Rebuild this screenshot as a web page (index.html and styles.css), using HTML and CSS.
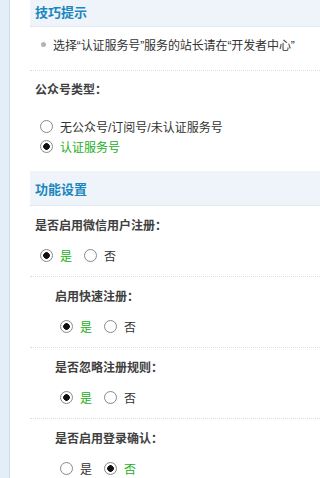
FILE: index.html
```html
<!DOCTYPE html>
<html lang="zh">
<head>
<meta charset="utf-8">
<link rel="stylesheet" href="styles.css">
</head>
<body>
<div class="page">
  <div class="rail"></div>
  <div class="main">
    <div class="section-head">技巧提示</div>
    <div class="tips">
      <span class="dot"></span><span class="tip-text">选择“认证服务号”服务的站长请在“开发者中心”</span>
    </div>
    <div class="type-block">
      <div class="label">公众号类型：</div>
      <label class="opt"><input type="radio" class="radio" name="t"><span>无公众号/订阅号/未认证服务号</span></label>
      <label class="opt on"><input type="radio" class="radio" name="t" checked><span>认证服务号</span></label>
    </div>
    <div class="section-head tall">功能设置</div>
    <div class="field">
      <div class="label">是否启用微信用户注册：</div>
      <div class="choices">
        <label class="opt on"><input type="radio" class="radio" name="a" checked><span>是</span></label>
        <label class="opt"><input type="radio" class="radio" name="a"><span>否</span></label>
      </div>
    </div>
    <div class="field sub">
      <div class="label">启用快速注册：</div>
      <div class="choices">
        <label class="opt on"><input type="radio" class="radio" name="b" checked><span>是</span></label>
        <label class="opt"><input type="radio" class="radio" name="b"><span>否</span></label>
      </div>
    </div>
    <div class="field sub">
      <div class="label">是否忽略注册规则：</div>
      <div class="choices">
        <label class="opt on"><input type="radio" class="radio" name="c" checked><span>是</span></label>
        <label class="opt"><input type="radio" class="radio" name="c"><span>否</span></label>
      </div>
    </div>
    <div class="field sub">
      <div class="label">是否启用登录确认：</div>
      <div class="choices">
        <label class="opt"><input type="radio" class="radio" name="d"><span>是</span></label>
        <label class="opt on"><input type="radio" class="radio" name="d" checked><span>否</span></label>
      </div>
    </div>
  </div>
</div>
</body>
</html>
```
FILE: styles.css
```css
html, body {
  margin: 0;
  padding: 0;
  background: #fff;
}
body {
  font-family: "Liberation Sans", "Noto Sans CJK SC", sans-serif;
  font-size: 12px;
  color: #333;
  overflow: hidden;
}
.page {
  display: flex;
  min-height: 478px;
}
.rail {
  width: 9px;
  flex: none;
  background: #e4eef9;
  border-right: 1px solid #c8ddef;
}
.main {
  flex: 1;
  min-width: 0;
  padding-left: 20px;
  overflow: hidden;
}
.section-head {
  height: 26px;
  line-height: 26px;
  padding-left: 5px;
  background: #eef4fa;
  border-bottom: 1px dotted #d6e2ec;
  color: #1b86bf;
  font-weight: bold;
  font-size: 13px;
}
.section-head.tall {
  height: 34px;
  line-height: 38px;
}
.tips {
  display: flex;
  align-items: center;
  height: 20px;
  padding: 7px 0 16px 0;
  border-bottom: 1px dotted #d6dde3;
  white-space: nowrap;
}
.dot {
  width: 5px;
  height: 5px;
  border-radius: 50%;
  background: #b4b4b4;
  margin: 0 7px 0 11px;
  flex: none;
}
.tip-text {
  color: #333;
  letter-spacing: -0.1px;
}
.label {
  height: 20px;
  line-height: 20px;
  padding-left: 5px;
  font-weight: bold;
  color: #404040;
}
.type-block {
  padding: 9px 0 15px 0;
}
.type-block .label {
  margin-bottom: 16px;
}
.type-block .opt {
  display: flex;
}
.opt {
  display: inline-flex;
  align-items: center;
  height: 20px;
  padding-left: 10px;
  gap: 7px;
  color: #333;
}
.opt.on {
  color: #22b022;
}
.choices {
  display: flex;
  gap: 2px;
  margin-top: 9px;
}
.radio {
  appearance: none;
  -webkit-appearance: none;
  margin: 0;
  width: 13px;
  height: 13px;
  border: 1px solid #8a8a8a;
  border-radius: 50%;
  background: radial-gradient(circle, #fff 0 60%, #ececec 100%);
  box-sizing: border-box;
  flex: none;
}
.radio:checked {
  background: radial-gradient(circle, #111 0 3px, #fff 3.6px 60%, #e8e8e8 100%);
}
.field {
  padding: 10px 0 11px 0;
  border-bottom: 1px dotted #d6dde3;
}
.field.sub {
  padding-left: 20px;
}
```
